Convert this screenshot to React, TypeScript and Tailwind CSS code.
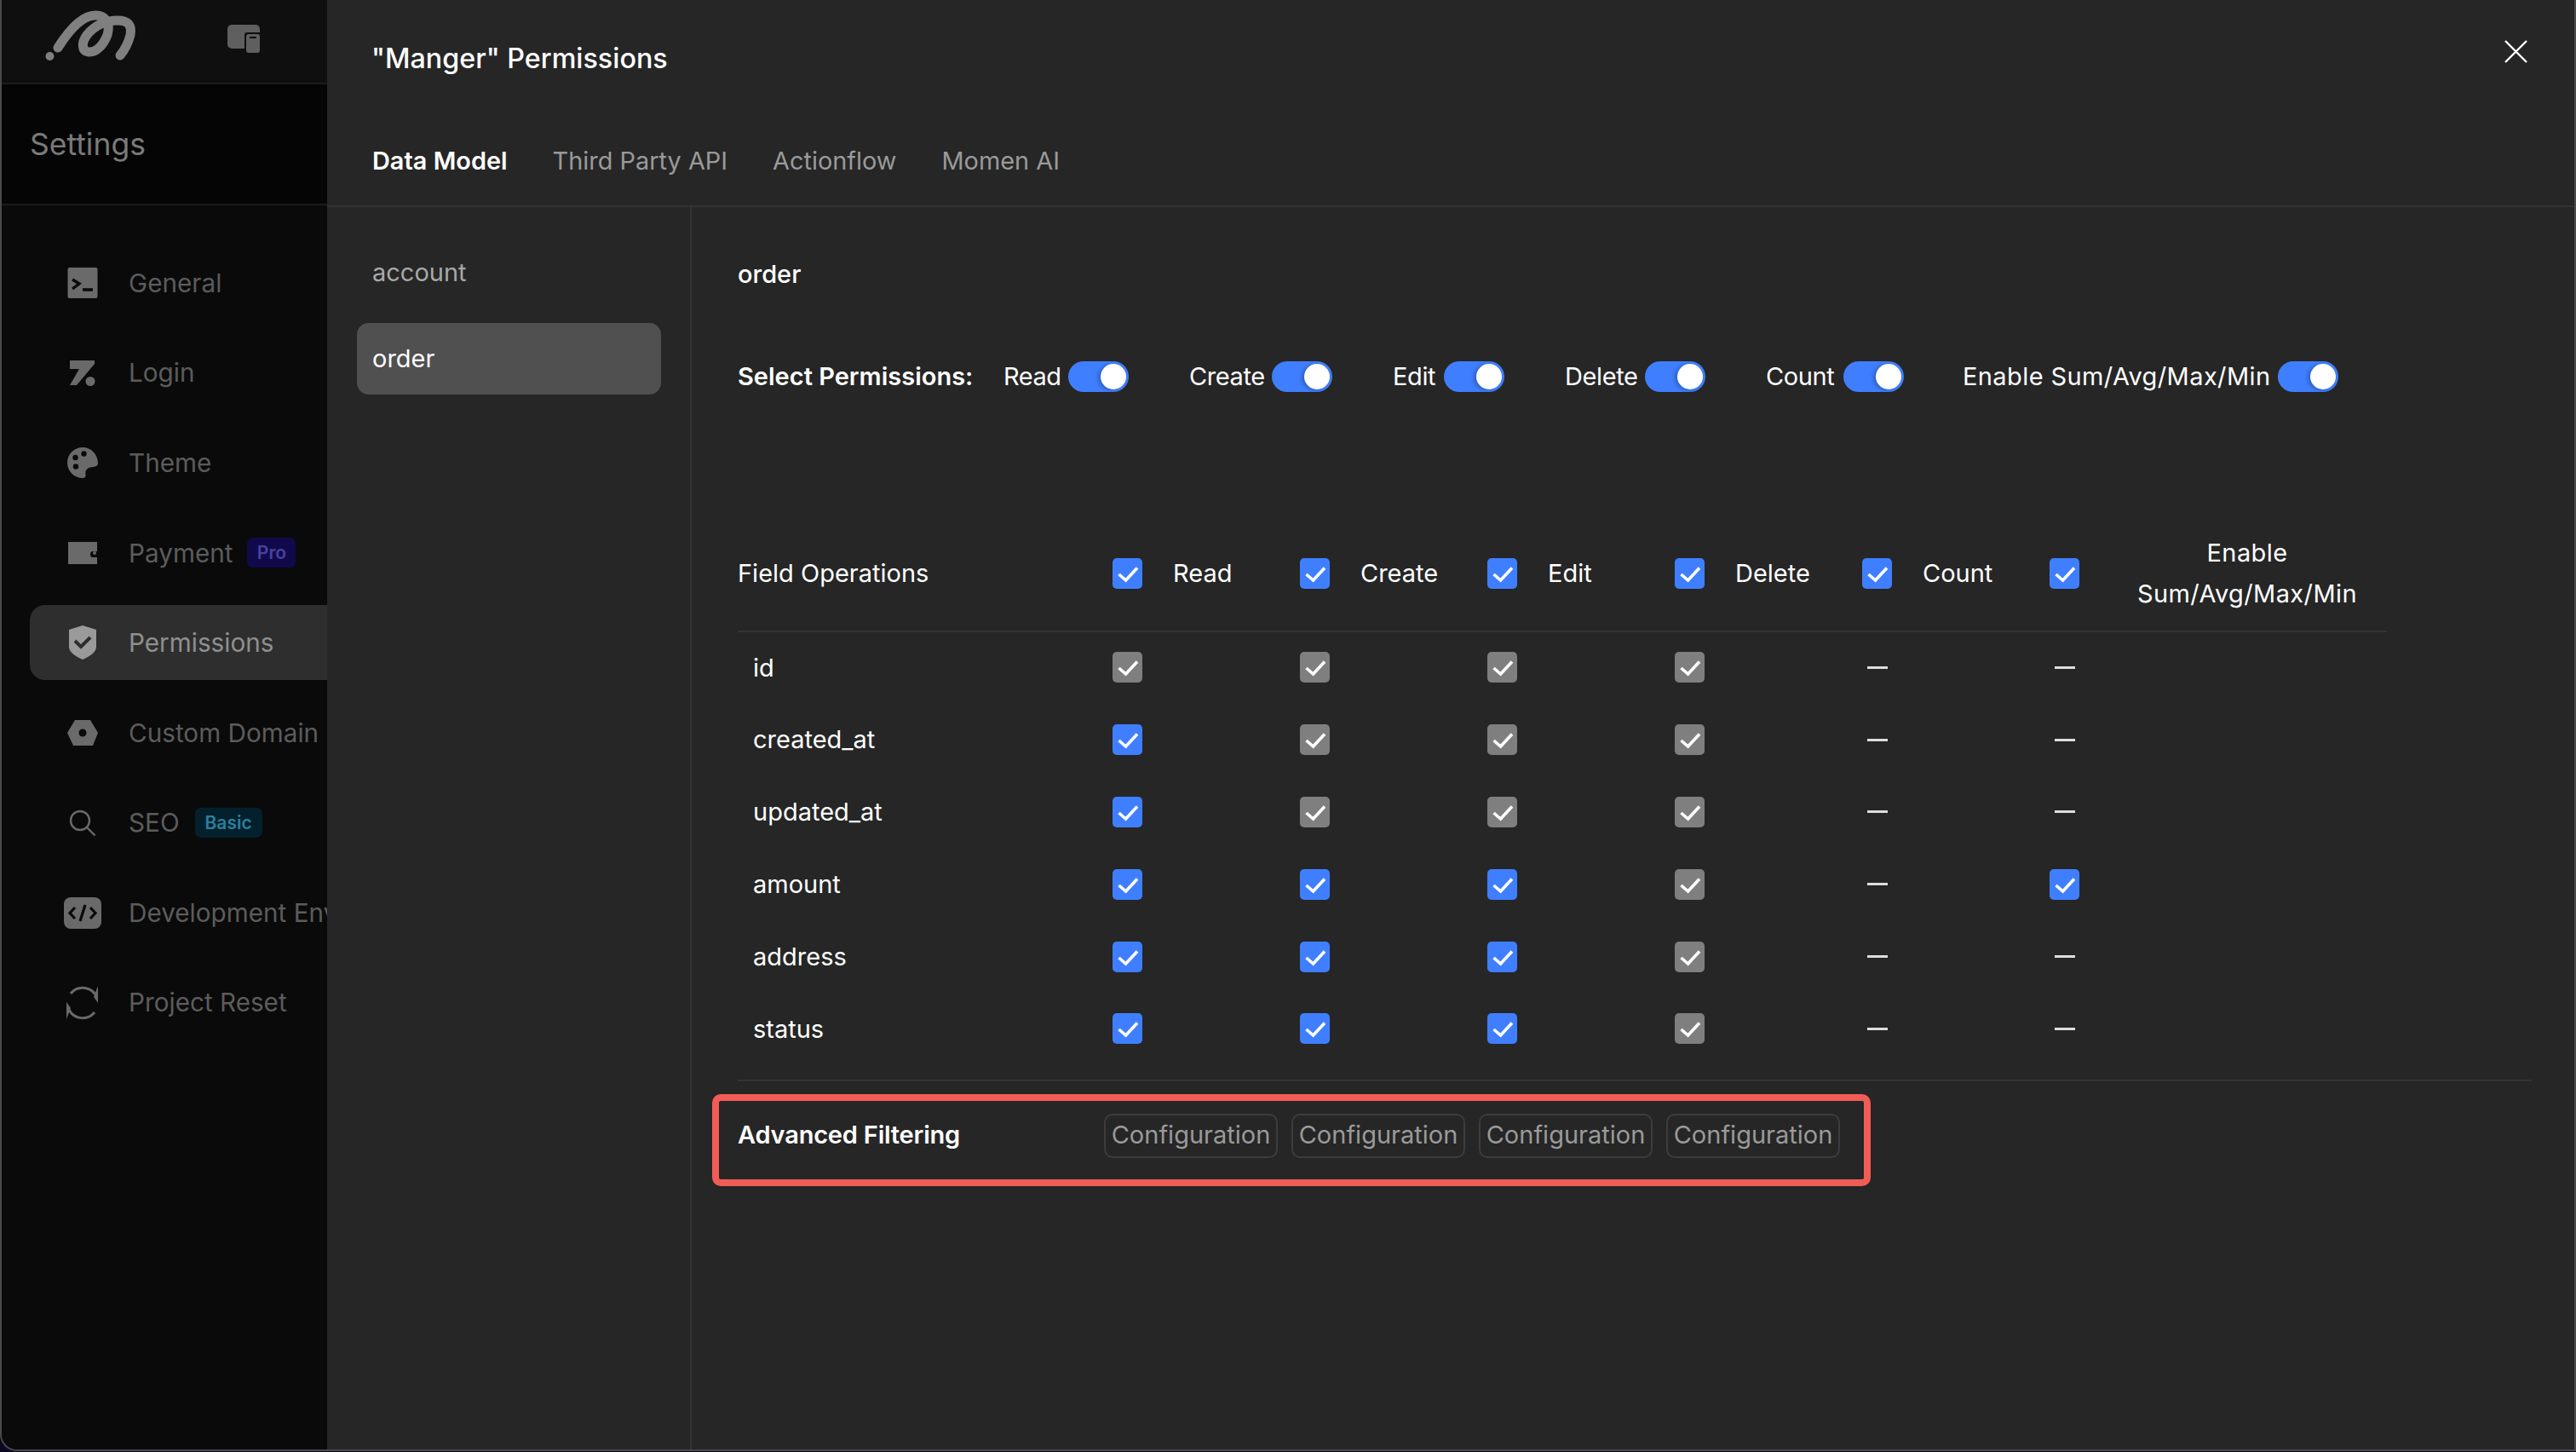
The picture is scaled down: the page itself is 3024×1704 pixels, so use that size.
import type { ReactNode } from "react";

type Cell = "b" | "g" | "-";

const TOGGLES = [
  { label: "Read", width: "w-[67px]", spacing: "tracking-[-0.5px]" },
  { label: "Create", width: "w-[88px]", spacing: "tracking-[-0.4px]" },
  { label: "Edit", width: "w-[51px]", spacing: "tracking-[-0.4px]" },
  { label: "Delete", width: "w-[85px]", spacing: "tracking-[-0.4px]" },
  { label: "Count", width: "w-[82px]", spacing: "tracking-[-0.4px]" },
  { label: "Enable Sum/Avg/Max/Min", width: "w-[361px]", spacing: "tracking-[0.4px]" },
];
const HEADER_COLS = ["Read", "Create", "Edit", "Delete", "Count"];

const ROWS: { name: string; cells: Cell[] }[] = [
  { name: "id", cells: ["g", "g", "g", "g", "-", "-"] },
  { name: "created_at", cells: ["b", "g", "g", "g", "-", "-"] },
  { name: "updated_at", cells: ["b", "g", "g", "g", "-", "-"] },
  { name: "amount", cells: ["b", "b", "b", "g", "-", "b"] },
  { name: "address", cells: ["b", "b", "b", "g", "-", "-"] },
  { name: "status", cells: ["b", "b", "b", "g", "-", "-"] },
];

const GRID = "grid grid-cols-[430px_repeat(5,220px)_92px_314px] items-center";

function Checkbox({ tone = "b" }: { tone?: "b" | "g" }) {
  return (
    <span
      className={`flex h-[36px] w-[35px] items-center justify-center rounded-[5px] ${
        tone === "b" ? "bg-[#3f7fff]" : "bg-[#7f7f7f]"
      }`}
    >
      <svg width="35" height="36" viewBox="0 0 35 36" fill="none">
        <path d="M7.5 19L15.6 26L29 11.5" stroke="#fff" strokeWidth="3.6" />
      </svg>
    </span>
  );
}

function Toggle() {
  return (
    <span className="flex h-[36px] w-[71px] shrink-0 items-center justify-end rounded-full bg-[#3f7fff] pr-[3px]">
      <span className="h-[30px] w-[30px] rounded-full bg-white shadow-[-3px_1px_5px_rgba(0,0,0,0.25)]" />
    </span>
  );
}

function NavItem({
  icon,
  label,
  badge,
  active,
}: {
  icon: ReactNode;
  label: string;
  badge?: ReactNode;
  active?: boolean;
}) {
  return (
    <div
      className={`flex h-[88px] items-center whitespace-nowrap rounded-l-[18px] ${
        active ? "bg-[#2e2e2e] text-[#8f8f8f]" : "text-[#5c5c5c]"
      }`}
    >
      <span className="flex w-[116px] shrink-0 justify-center pl-[8px]">{icon}</span>
      <span>{label}</span>
      {badge}
    </div>
  );
}

const NAV_ICON = "#6a6a6a";

const navItems = [
  {
    label: "General",
    icon: (
      <svg width="36" height="36" viewBox="0 0 36 36">
        <rect x="0.5" width="35" height="36" rx="2" fill={NAV_ICON} />
        <path d="M6 14l8 5-8 6" stroke="#0a0a0a" strokeWidth="3.4" fill="none" />
        <path d="M18 26h12" stroke="#0a0a0a" strokeWidth="3.6" />
      </svg>
    ),
  },
  {
    label: "Login",
    icon: (
      <svg width="34" height="32" viewBox="0 0 34 32">
        <path d="M2 1H31V5L10 30H2L13 11H2Z" fill={NAV_ICON} />
        <circle cx="26" cy="25.500" r="5.500" fill={NAV_ICON} />
      </svg>
    ),
  },
  {
    label: "Theme",
    icon: (
      <svg width="36" height="36" viewBox="0 0 36 36">
        <path
          d="M18 0C8 0 0 8 0 18s8 18 18 18c3 0 4-2 3.500-4.500-.6-3 .5-6 4-7.500 3-1.200 10.500-.5 10.500-5C36 8 28 0 18 0z"
          fill={NAV_ICON}
        />
        <circle cx="9.500" cy="12" r="3.200" fill="#0a0a0a" />
        <circle cx="19.500" cy="7.500" r="3.200" fill="#0a0a0a" />
        <circle cx="10" cy="22.500" r="3.200" fill="#0a0a0a" />
      </svg>
    ),
  },
  {
    label: "Payment",
    badge: (
      <span className="ml-[17px] flex h-[35px] w-[57px] items-center justify-center rounded-[7px] bg-[#100a4d] text-[21px] font-semibold text-[#48429c]">
        Pro
      </span>
    ),
    icon: (
      <svg width="36" height="28" viewBox="0 0 36 28">
        <path d="M1 1h34v11h-6a4 4 0 0 0 0 7h6v8H1z" fill={NAV_ICON} />
        <circle cx="32" cy="14" r="2" fill={NAV_ICON} />
      </svg>
    ),
  },
  {
    label: "Permissions",
    active: true,
    icon: (
      <svg width="34" height="40" viewBox="0 0 34 40">
        <path d="M17 0l16 5v20c0 7-9 12-16 15C10 37 1 32 1 25V5z" fill="#9a9a9a" />
        <path d="M8 18l7 7 11-11" stroke="#2e2e2e" strokeWidth="4" fill="none" />
      </svg>
    ),
  },
  {
    label: "Custom Domain",
    icon: (
      <svg width="36" height="30" viewBox="0 0 36 30">
        <path d="M9 0h18l9 15-6 15H7L0 15z" fill={NAV_ICON} />
        <circle cx="18" cy="15" r="4.500" fill="#0a0a0a" />
      </svg>
    ),
  },
  {
    label: "SEO",
    badge: (
      <span className="ml-[18px] flex h-[35px] w-[79px] items-center justify-center rounded-[7px] bg-[#04202d] text-[21px] font-semibold text-[#2a7f9e]">
        Basic
      </span>
    ),
    icon: (
      <svg width="32" height="32" viewBox="0 0 32 32" fill="none">
        <circle cx="13" cy="13" r="11" stroke={NAV_ICON} strokeWidth="2.400" />
        <path d="M21 21l9.500 9.500" stroke={NAV_ICON} strokeWidth="2.400" />
      </svg>
    ),
  },
  {
    label: "Development Environment",
    icon: (
      <svg width="44" height="37" viewBox="0 0 44 37" fill="none">
        <rect width="44" height="37" rx="8" fill={NAV_ICON} />
        <path
          d="M13 12l-6 6.500 6 6.500M31 12l6 6.500-6 6.500M25 9l-6 19"
          stroke="#0a0a0a"
          strokeWidth="3.200"
        />
      </svg>
    ),
  },
  {
    label: "Project Reset",
    icon: (
      <svg width="42" height="42" viewBox="0 0 42 42" fill="none">
        <path
          d="M7 10a18 18 0 0 1 31 5M35 32a18 18 0 0 1-30-3"
          stroke={NAV_ICON}
          strokeWidth="3"
        />
        <path d="M39 1v20l-5-7zM2 40V20l5 7z" fill={NAV_ICON} />
      </svg>
    ),
  },
];

function Sidebar() {
  return (
    <aside className="flex w-[382px] shrink-0 flex-col overflow-hidden bg-[#0a0a0a] text-[29.700px]">
      <div className="flex h-[99px] shrink-0 items-center border-b-2 border-[#1b1b1b] bg-[#0f0f0f]">
        <svg width="382" height="99" viewBox="2 0 382 99" fill="none">
          <circle cx="58.500" cy="67" r="5" fill="#808080" />
          <path
            d="M68 57C80 38 96 19 112 19C124 19 130 28 126 42C121 55 112 63 104 62C96 61 95 52 102 42C112 30 124 25 138 25C150 25 155 30 153 42C151 50 146 60 141 66"
            stroke="#808080"
            strokeWidth="11"
            strokeLinecap="round"
          />
          <rect x="267" y="30" width="38" height="28" rx="5" fill="#5f5f5f" />
          <rect x="287" y="39" width="20" height="26" rx="3" fill="#0f0f0f" />
          <rect x="289" y="41" width="16" height="22" rx="3" fill="#5f5f5f" />
          <rect x="293" y="44" width="8" height="2" fill="#0f0f0f" />
        </svg>
      </div>
      <div className="flex h-[142px] shrink-0 items-center border-b-2 border-[#1b1b1b] bg-[#050505] pl-[33px] pt-[2px] text-[35.500px] text-[#7a7a7a]">
        Settings
      </div>
      <nav className="flex flex-col gap-[17.600px] pl-[33px] pt-[47px]">
        {navItems.map((item) => (
          <NavItem key={item.label} {...item} />
        ))}
      </nav>
    </aside>
  );
}

function Header() {
  return (
    <header className="relative h-[243px] shrink-0 border-b-2 border-[#333333] pl-[53px]">
      <div className="-ml-[1px] pt-[47px] text-[32.300px] font-medium leading-[44px] text-white">
        "Manger" Permissions
      </div>
      <div className="mt-[76px] flex gap-[53px] text-[28.900px] leading-[44px] text-[#9a9a9a]">
        <span className="font-semibold text-white">Data Model</span>
        <span>Third Party API</span>
        <span>Actionflow</span>
        <span>Momen AI</span>
      </div>
      {/* close */}
      <svg
        className="absolute right-[55px] top-[47px]"
        width="27"
        height="27"
        viewBox="0 0 27 27"
        fill="none"
      >
        <path d="M1 1l25 25M26 1L1 26" stroke="#fff" strokeWidth="2.400" />
      </svg>
    </header>
  );
}

export default function App() {
  return (
    <div className="h-[1704px] w-[3024px] bg-[#0c0824] [font-family:Inter,sans-serif]">
      <div className="flex h-[1703px] overflow-hidden rounded-bl-[20px] border-x-2 border-b-2 border-[#4a4a4a] bg-[#262626]">
        <Sidebar />
        <div className="flex min-w-0 flex-1 flex-col bg-[#262626]">
          <Header />
          <div className="flex flex-1">
            <div className="w-[428px] shrink-0 border-r-2 border-[#333333] pt-[35px] text-[29px]">
              <div className="flex h-[84px] items-center pl-[53px] text-[#a8a8a8]">account</div>
              <div className="ml-[35px] mt-[17px] flex h-[84px] w-[357px] items-center rounded-[14px] bg-[#505050] pl-[18px] text-white">
                order
              </div>
            </div>

            <div className="min-w-0 flex-1 pl-[54px] pr-[50px] pt-[59px] text-[29px] text-white">
              <div className="font-medium leading-[40px]">order</div>

              <div className="mt-[82px] flex h-[36px] items-center">
                <span className="w-[312px] shrink-0 font-semibold">Select Permissions:</span>
                <div className="flex gap-[71px]">
                  {TOGGLES.map((t, i) => (
                    <div
                      key={t.label}
                      className={`flex items-center gap-[9px] ${i === 5 ? "-ml-[2px]" : ""}`}
                    >
                      <span className={`${t.width} ${t.spacing} whitespace-nowrap`}>{t.label}</span>
                      <Toggle />
                    </div>
                  ))}
                </div>
              </div>

              <div className="mt-[146px] w-[1936px] border-b-2 border-[#333333]">
                <div className={`${GRID} h-[134px]`}>
                  <span>Field Operations</span>
                  {HEADER_COLS.map((label) => (
                    <div key={label} className="flex items-center gap-[36px] pl-[10px]">
                      <Checkbox />
                      <span>{label}</span>
                    </div>
                  ))}
                  <div className="pl-[10px]">
                    <Checkbox />
                  </div>
                  <div className="pr-[14px] text-center leading-[48px] tracking-[0.4px]">
                    Enable
                    <br />
                    Sum/Avg/Max/Min
                  </div>
                </div>
              </div>

              <div className="-mt-[1px] w-[1936px]">
                {ROWS.map((row) => (
                  <div key={row.name} className={`${GRID} h-[84.800px]`}>
                    <span className="pl-[18px]">{row.name}</span>
                    {row.cells.map((cell, i) => (
                      <div key={i} className="pl-[10px]">
                        {cell === "-" ? (
                          <span className="flex w-[35px] justify-center">
                            <span className="block h-[3px] w-[24px] bg-[#dddddd]" />
                          </span>
                        ) : (
                          <Checkbox tone={cell} />
                        )}
                      </div>
                    ))}
                    <span />
                  </div>
                ))}
              </div>

              <div className="mt-[17px] h-[2px] bg-[#333333]" />

              <div className="-ml-[30px] mt-[15px] h-[108px] w-[1360px] rounded-[10px] border-[8px] border-[#f25c56] pl-[22px] pt-[15px]">
                <div className="flex h-[52px] items-center">
                  <span className="w-[430px] shrink-0 pb-[3px] font-semibold tracking-[-0.2px]">
                    Advanced Filtering
                  </span>
                  <div className="flex gap-[16px]">
                    {[0, 1, 2, 3].map((i) => (
                      <span
                        key={i}
                        className="flex h-[52px] w-[204px] items-center justify-center rounded-[10px] border-2 border-[#3d3d3d] pb-[2px] text-[#9a9a9a]"
                      >
                        Configuration
                      </span>
                    ))}
                  </div>
                </div>
              </div>
            </div>
          </div>
        </div>
      </div>
    </div>
  );
}
